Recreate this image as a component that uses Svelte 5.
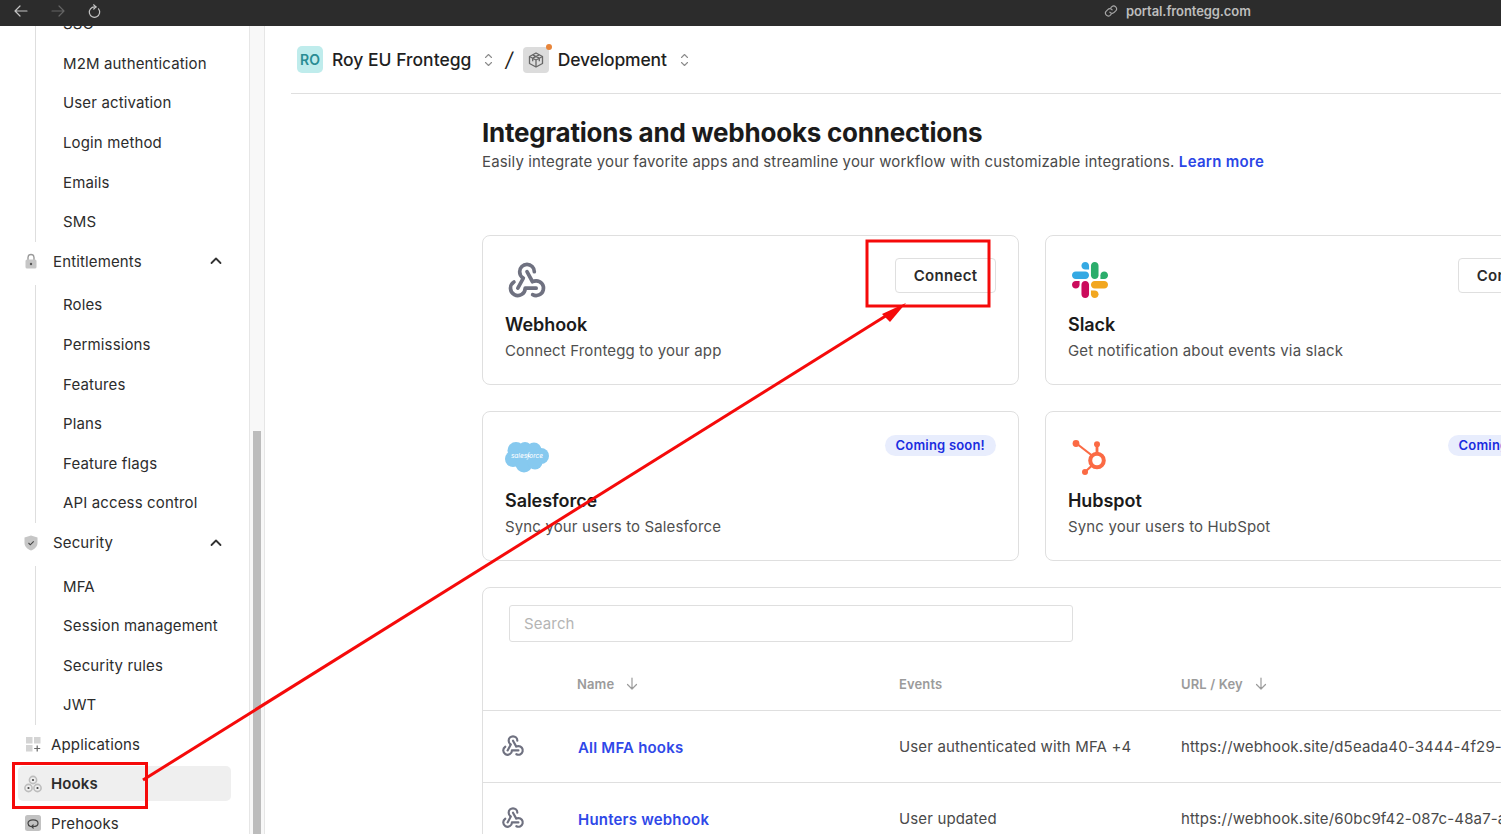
<script lang="ts">
  const webhookPaths = [
    "M4.876 13.61a4 4 0 1 0 6.124 3.39h6",
    "M15.066 20.502a4 4 0 1 0 1.934 -7.502c-.706 0 -1.424 .179 -2 .5l-3 -5.5",
    "M16 8a4 4 0 1 0 -8 0c0 1.506 .77 2.818 2 3.5l-3 5.5",
  ];

  const navGroups = [
    { items: ["SSO", "M2M authentication", "User activation", "Login method", "Emails", "SMS"], head: "Entitlements", icon: "lock" },
    { items: ["Roles", "Permissions", "Features", "Plans", "Feature flags", "API access control"], head: "Security", icon: "shield" },
    { items: ["MFA", "Session management", "Security rules", "JWT"], head: "", icon: "" },
  ];

  const hooks = [
    { name: "All MFA hooks", events: "User authenticated with MFA +4", url: "https://webhook.site/d5eada40-3444-4f29-a1c7-92be01d7f3aa" },
    { name: "Hunters webhook", events: "User updated", url: "https://webhook.site/60bc9f42-087c-48a7-a3d1-5fe2c8b1704e" },
  ];
</script>

{#snippet webhook(size, stroke)}
  <svg width={size} height={size} viewBox="0 0 24 24" fill="none" stroke="#6f7180" stroke-width={stroke} stroke-linecap="round" stroke-linejoin="round">
    {#each webhookPaths as d}
      <path {d} />
    {/each}
  </svg>
{/snippet}

{#snippet updown()}
  <svg class="updown" width="9" height="14" viewBox="0 0 9 14" fill="none" stroke="#8c8c8c" stroke-width="1.1" stroke-linecap="round" stroke-linejoin="round">
    <path d="M1.5 4.5 4.5 1.5l3 3" />
    <path d="M1.5 9.5l3 3 3-3" />
  </svg>
{/snippet}

{#snippet sortArrow()}
  <svg width="12" height="13" viewBox="0 0 12 13" fill="none" stroke="#9b9b9b" stroke-width="1.2" stroke-linecap="round" stroke-linejoin="round">
    <path d="M6 1v11M1.5 7.5 6 12l4.5-4.5" />
  </svg>
{/snippet}

<div class="page">
  <header class="browser-bar">
    <svg class="browser-bar__icon" width="14" height="12" viewBox="0 0 14 12" fill="none" stroke="#c4c4c4" stroke-width="1.2" stroke-linecap="round" stroke-linejoin="round">
      <path d="M13 6H1M6 1 1 6l5 5" />
    </svg>
    <svg class="browser-bar__icon" width="14" height="12" viewBox="0 0 14 12" fill="none" stroke="#646464" stroke-width="1.2" stroke-linecap="round" stroke-linejoin="round">
      <path d="M1 6h12M8 1l5 5-5 5" />
    </svg>
    <svg class="browser-bar__icon" width="13" height="15" viewBox="0 0 13 15" fill="none" stroke="#c4c4c4" stroke-width="1.2" stroke-linecap="round" stroke-linejoin="round">
      <path d="M10.500 4.800a5.200 5.200 0 1 1-3.900-1.900H8" />
      <path d="M5.600.8 8 2.900 5.800 5" />
    </svg>
    <div class="browser-bar__url">
      <svg width="14" height="14" viewBox="0 0 24 24" fill="none" stroke="#a8a8a8" stroke-width="2" stroke-linecap="round" stroke-linejoin="round">
        <path d="M10 14a5 5 0 0 0 7.500.5l3-3a5 5 0 0 0-7-7l-1.700 1.700" />
        <path d="M14 10a5 5 0 0 0-7.500-.5l-3 3a5 5 0 0 0 7 7l1.700-1.700" />
      </svg>
      <span>portal.frontegg.com</span>
    </div>
  </header>

  <div class="body">
    <aside class="sidebar">
      <div class="sidebar__inner">
        {#each navGroups as group}
          <ul class="sublist">
            {#each group.items as item}
              <li class="sublist__item">{item}</li>
            {/each}
          </ul>
          {#if group.head}
            <div class="nav-head">
              {#if group.icon === "lock"}
                <svg width="14" height="16" viewBox="0 0 14 16">
                  <path d="M4 7V4.500a3 3 0 0 1 6 0V7" fill="none" stroke="#9a9a9a" stroke-width="1.400" />
                  <rect x="1.500" y="6.500" width="11" height="9" rx="1.500" fill="#c6c6c6" />
                  <circle cx="7" cy="11" r="1.200" fill="#555" />
                </svg>
              {:else}
                <svg width="14" height="16" viewBox="0 0 14 16">
                  <path d="M7 .5 13.500 2.500V8c0 3.600-2.800 6.200-6.500 7.500C3.300 14.200.5 11.600.5 8V2.500z" fill="#c6c6c6" />
                  <path d="M4.500 8 6.300 9.800 9.700 6.300" fill="none" stroke="#444" stroke-width="1.100" />
                </svg>
              {/if}
              <span class="nav-head__label">{group.head}</span>
              <svg width="12" height="8" viewBox="0 0 12 8" fill="none" stroke="#333" stroke-width="1.800" stroke-linecap="round" stroke-linejoin="round">
                <path d="M1.500 6 6 1.500 10.500 6" />
              </svg>
            </div>
          {/if}
        {/each}

        <div class="nav-links">
          <div class="nav-link">
            <svg width="15" height="15" viewBox="0 0 15 15">
              <rect width="6.500" height="6.500" fill="#d4d4d4" />
              <rect x="8" width="6.500" height="6.500" fill="#d4d4d4" />
              <rect y="8" width="6.500" height="6.500" fill="#d4d4d4" />
              <path d="M11.200 8.500v6M8.200 11.500h6" stroke="#666" stroke-width="1.200" />
            </svg>
            <span>Applications</span>
          </div>
          <div class="nav-link nav-link--active">
            <svg width="18" height="18" viewBox="0 0 18 18">
              <circle cx="9" cy="5" r="3.600" fill="none" stroke="#bdbdbd" stroke-width="1.600" />
              <circle cx="4.500" cy="13" r="3.600" fill="none" stroke="#bdbdbd" stroke-width="1.600" />
              <circle cx="13.500" cy="13" r="3.600" fill="none" stroke="#bdbdbd" stroke-width="1.600" />
              <circle cx="9" cy="5" r="1.100" fill="#444" />
              <circle cx="4.500" cy="13" r="1.100" fill="#444" />
              <circle cx="13.500" cy="13" r="1.100" fill="#444" />
            </svg>
            <span>Hooks</span>
          </div>
          <div class="nav-link nav-link--prehooks">
            <svg width="16" height="16" viewBox="0 0 16 16">
              <rect width="16" height="16" rx="2.500" fill="#c2c2c2" />
              <path d="M5.500 11.500C3.800 10.800 3 9.600 3 8.200 3 6.200 5.200 4.800 8 4.800s5 1.400 5 3.400-2.200 3.300-5 3.300H7" fill="none" stroke="#444" stroke-width="1.200" stroke-linecap="round" />
              <path d="M8.200 10 6.600 11.500 8.200 13" fill="none" stroke="#444" stroke-width="1.200" stroke-linecap="round" />
            </svg>
            <span>Prehooks</span>
          </div>
        </div>
      </div>
    </aside>

    <div class="gutter"><div class="gutter__thumb"></div></div>

    <main class="main">
      <div class="crumbs">
        <span class="crumbs__avatar">RO</span>
        <span class="crumbs__name">Roy EU Frontegg</span>
        {@render updown()}
        <span class="crumbs__slash">/</span>
        <span class="crumbs__env">
          <svg width="16" height="16" viewBox="0 0 16 16" fill="none" stroke="#666" stroke-width="1.300" stroke-linejoin="round">
            <path d="M8 1 14.500 4.500V11.500L8 15 1.500 11.500V4.500z" />
            <path d="M1.500 4.500 8 8l6.500-3.500M8 8v7M4.700 2.800 11.300 6.200v3M11.300 2.800 4.700 6.200v3" />
          </svg>
          <span class="crumbs__dot"></span>
        </span>
        <span class="crumbs__name crumbs__name--env">Development</span>
        {@render updown()}
      </div>

      <div class="content">
        <h1>Integrations and webhooks connections</h1>
        <p class="lead">Easily integrate your favorite apps and streamline your workflow with customizable integrations. <a href="#learn">Learn more</a></p>

        <div class="cards">
          <section class="card">
            <div class="card__top">
              <div class="card__logo card__logo--webhook">{@render webhook(44, 2)}</div>
              <button class="connect" type="button">Connect</button>
            </div>
            <h2>Webhook</h2>
            <p>Connect Frontegg to your app</p>
          </section>

          <section class="card">
            <div class="card__top">
              <div class="card__logo card__logo--slack">
                <svg width="36" height="36" viewBox="0 0 122.800 122.800">
                  <path d="M25.800 77.600c0 7.100-5.800 12.900-12.900 12.900S0 84.700 0 77.600s5.800-12.900 12.900-12.900h12.900v12.900z" fill="#cb0c5c" />
                  <path d="M32.300 77.600c0-7.100 5.800-12.900 12.900-12.900s12.900 5.800 12.900 12.900v32.300c0 7.100-5.800 12.900-12.900 12.900s-12.900-5.800-12.900-12.900V77.600z" fill="#cb0c5c" />
                  <path d="M45.200 25.800c-7.100 0-12.900-5.800-12.900-12.900S38.100 0 45.200 0s12.900 5.800 12.900 12.900v12.900H45.200z" fill="#35a9e3" />
                  <path d="M45.200 32.300c7.100 0 12.900 5.800 12.900 12.900s-5.800 12.900-12.900 12.900H12.900C5.800 58.100 0 52.300 0 45.200s5.800-12.900 12.900-12.900h32.300z" fill="#35a9e3" />
                  <path d="M97 45.200c0-7.100 5.800-12.900 12.900-12.900s12.900 5.800 12.900 12.900-5.800 12.900-12.900 12.900H97V45.200z" fill="#2bad6b" />
                  <path d="M90.500 45.200c0 7.100-5.800 12.900-12.900 12.900s-12.900-5.800-12.900-12.900V12.900C64.700 5.800 70.500 0 77.600 0s12.900 5.800 12.900 12.900v32.300z" fill="#2bad6b" />
                  <path d="M77.600 97c7.100 0 12.900 5.800 12.900 12.900s-5.800 12.900-12.900 12.900-12.900-5.800-12.900-12.900V97h12.900z" fill="#f2a71f" />
                  <path d="M77.600 90.500c-7.100 0-12.900-5.800-12.900-12.900s5.800-12.900 12.900-12.900h32.300c7.100 0 12.900 5.800 12.900 12.900s-5.800 12.900-12.900 12.900H77.600z" fill="#f2a71f" />
                </svg>
              </div>
              <button class="connect" type="button">Connect</button>
            </div>
            <h2>Slack</h2>
            <p>Get notification about events via slack</p>
          </section>

          <section class="card">
            <div class="card__top">
              <div class="card__logo card__logo--salesforce">
                <svg width="44" height="32" viewBox="0 0 44 32">
                  <g fill="#86c9ef">
                    <circle cx="11" cy="9.500" r="8.500" />
                    <circle cx="20" cy="8" r="7" />
                    <circle cx="29" cy="9" r="7.500" />
                    <circle cx="36" cy="15" r="8" />
                    <circle cx="8" cy="18" r="8" />
                    <circle cx="19" cy="23" r="8.500" />
                    <circle cx="30" cy="21" r="7.500" />
                  </g>
                  <text x="22" y="17" text-anchor="middle" class="sf-text">salesforce</text>
                </svg>
              </div>
              <span class="soon">Coming soon!</span>
            </div>
            <h2>Salesforce</h2>
            <p>Sync your users to Salesforce</p>
          </section>

          <section class="card">
            <div class="card__top">
              <div class="card__logo card__logo--hubspot">
                <svg width="36" height="36" viewBox="0 0 36 36">
                  <g stroke="#fb6a44" fill="none">
                    <circle cx="25" cy="21.500" r="6.800" stroke-width="4" />
                    <path d="M4.500 4.500 20 16.500" stroke-width="2.200" />
                    <path d="M25 5v10" stroke-width="2.800" />
                    <path d="M13 33 20 26.500" stroke-width="2.200" />
                  </g>
                  <g fill="#fb6a44">
                    <circle cx="4" cy="4.500" r="3.400" />
                    <circle cx="25" cy="5.300" r="3" />
                    <circle cx="13" cy="33" r="3" />
                  </g>
                </svg>
              </div>
              <span class="soon">Coming soon!</span>
            </div>
            <h2>Hubspot</h2>
            <p>Sync your users to HubSpot</p>
          </section>
        </div>

        <section class="table-card">
          <div class="search">Search</div>
          <div class="table-row table-row--head">
            <span></span>
            <span class="th">Name {@render sortArrow()}</span>
            <span class="th">Events</span>
            <span class="th">URL / Key {@render sortArrow()}</span>
          </div>
          {#each hooks as hook}
            <div class="table-row">
              <span class="table-row__icon">{@render webhook(26, 2)}</span>
              <a class="table-row__name" href="#hook">{hook.name}</a>
              <span>{hook.events}</span>
              <span class="table-row__url">{hook.url}</span>
            </div>
          {/each}
        </section>
      </div>
    </main>
  </div>

  <!-- red annotation drawn over the screenshot -->
  <svg class="markup" width="1501" height="834" viewBox="0 0 1501 834" fill="none">
    <rect x="867" y="241" width="122" height="65" stroke="#f50a0a" stroke-width="3" />
    <rect x="13.500" y="763.500" width="133" height="44" stroke="#f50a0a" stroke-width="3" />
    <path d="M143 780 892 312" stroke="#f50a0a" stroke-width="3" />
    <path d="M906 303 882 314 890 322z" fill="#f50a0a" />
  </svg>
</div>

<style>
  :global(body) {
    margin: 0;
    background: #fff;
  }

  .page {
    position: relative;
    display: flex;
    flex-direction: column;
    width: 1501px;
    height: 834px;
    overflow: hidden;
    color: #2c2c2c;
    font-family: Inter, "Liberation Sans", sans-serif;
    font-size: 15px;
    letter-spacing: 0.14px;
  }

  .browser-bar {
    display: flex;
    flex: none;
    align-items: center;
    gap: 23px;
    box-sizing: border-box;
    height: 26px;
    padding: 0 0 4px 14px;
    background: #2c2c2c;
  }

  .browser-bar__url {
    display: flex;
    align-items: center;
    gap: 8px;
    margin-left: 980px;
    color: #bdbdbd;
    font-size: 13px;
    font-weight: 600;
    letter-spacing: -0.1px;
  }

  .body {
    display: flex;
    flex: 1;
    min-height: 0;
  }

  .sidebar {
    flex: none;
    width: 249px;
    overflow: hidden;
    border-right: 1px solid #e6e6e6;
  }

  .sidebar__inner {
    margin-top: -22px;
  }

  .sublist {
    margin: 0 0 0 35px;
    padding: 0 0 0 27px;
    border-left: 1px solid #dedede;
    list-style: none;
  }

  .sublist:not(:first-child) {
    margin-top: 4px;
  }

  .sublist__item {
    display: flex;
    align-items: center;
    height: 39.6px;
    white-space: nowrap;
  }

  .nav-head {
    display: flex;
    align-items: center;
    gap: 15px;
    height: 39.6px;
    padding: 0 27px 0 24px;
  }

  .nav-head__label {
    flex: 1;
  }

  .nav-links {
    display: flex;
    flex-direction: column;
    gap: 4.6px;
    padding: 2px 0 0 18px;
  }

  .nav-link {
    display: flex;
    align-items: center;
    gap: 10px;
    width: 213px;
    height: 35px;
    padding-left: 8px;
    box-sizing: border-box;
    border-radius: 5px;
  }

  .nav-link--active {
    gap: 9px;
    padding-left: 6px;
    background: #efefef;
    font-weight: 600;
  }

  .nav-link--prehooks {
    gap: 10px;
    padding-left: 7px;
  }

  .gutter {
    flex: none;
    width: 15px;
    padding: 405px 3px 0;
    box-sizing: border-box;
    border-right: 1px solid #e6e6e6;
    background: #f8f8f8;
  }

  .gutter__thumb {
    width: 8px;
    height: 100%;
    background: #bcbcbc;
  }

  .main {
    flex: 1;
    min-width: 0;
    padding-left: 26px;
    background: #fff;
  }

  .crumbs {
    display: flex;
    align-items: center;
    box-sizing: border-box;
    height: 68px;
    padding-left: 6px;
    border-bottom: 1px solid #dfdfdf;
    color: #1f1f1f;
  }

  .crumbs__avatar {
    display: flex;
    flex: none;
    align-items: center;
    justify-content: center;
    width: 26px;
    height: 27px;
    margin-right: 9px;
    border-radius: 5px;
    background: #bfecec;
    color: #2a8c94;
    font-size: 14px;
    font-weight: 600;
  }

  .crumbs__name {
    font-size: 17.5px;
    font-weight: 500;
    letter-spacing: 0;
  }

  .crumbs__name--env {
    margin-left: 9px;
    letter-spacing: -0.15px;
  }

  .updown {
    margin-left: 13px;
  }

  .crumbs__slash {
    margin: 0 10px 0 12px;
    font-size: 20px;
    font-style: italic;
  }

  .crumbs__env {
    position: relative;
    display: flex;
    flex: none;
    align-items: center;
    justify-content: center;
    width: 26px;
    height: 26px;
    border-radius: 4px;
    background: #dcdcdc;
  }

  .crumbs__dot {
    position: absolute;
    top: -3px;
    right: -3px;
    width: 6px;
    height: 6px;
    border-radius: 50%;
    background: #e8853a;
  }

  .content {
    padding: 22px 0 0 191px;
  }

  h1 {
    margin: 0;
    color: #1b1b1b;
    font-size: 26px;
    font-weight: 700;
    line-height: 34px;
    letter-spacing: -0.22px;
    white-space: nowrap;
  }

  .lead {
    margin: 2px 0 0;
    color: #4a4a4a;
    line-height: 20px;
    white-space: nowrap;
  }

  .lead a {
    color: #2b46e6;
    font-weight: 600;
    letter-spacing: 0.3px;
    text-decoration: none;
  }

  .cards {
    display: grid;
    grid-template-columns: 537px 537px;
    gap: 26px;
    margin-top: 63px;
  }

  .card {
    box-sizing: border-box;
    height: 150px;
    padding: 22px 22px 0;
    border: 1px solid #dfdfdf;
    border-radius: 8px;
  }

  .card__top {
    display: flex;
    align-items: flex-start;
    justify-content: space-between;
    height: 55px;
  }

  .card__logo {
    display: flex;
  }

  .card__logo--webhook {
    margin-top: -1px;
  }

  .card__logo--slack {
    margin: 4px 0 0 4px;
  }

  .card__logo--salesforce {
    margin-top: 7px;
  }

  .card__logo--hubspot {
    margin: 5px 0 0 4px;
  }

  .sf-text {
    fill: #fff;
    font-size: 6.5px;
    font-style: italic;
    letter-spacing: 0;
  }

  .connect {
    box-sizing: border-box;
    width: 101px;
    height: 35px;
    padding: 0;
    border: 1px solid #dfdfdf;
    border-radius: 4px;
    background: #fff;
    color: #2b2b2b;
    font: inherit;
    font-weight: 600;
    letter-spacing: 0.3px;
  }

  .soon {
    margin-top: 1px;
    padding: 0 11px;
    border-radius: 11px;
    background: #e8edfd;
    color: #1a2ce0;
    font-size: 13px;
    font-weight: 600;
    line-height: 21px;
    letter-spacing: 0.2px;
  }

  h2 {
    margin: 0;
    color: #1b1b1b;
    font-size: 18px;
    font-weight: 600;
    line-height: 24px;
    letter-spacing: -0.05px;
  }

  .card p {
    margin: 4px 0 0;
    color: #4f4f4f;
    line-height: 20px;
    white-space: nowrap;
  }

  .table-card {
    box-sizing: border-box;
    width: 1100px;
    height: 400px;
    margin-top: 26px;
    border: 1px solid #dfdfdf;
    border-radius: 8px 8px 0 0;
  }

  .search {
    display: flex;
    align-items: center;
    box-sizing: border-box;
    width: 564px;
    height: 37px;
    margin: 17px 0 0 26px;
    padding-left: 14px;
    border: 1px solid #dfdfdf;
    border-radius: 3px;
    color: #b5b5b5;
  }

  .table-row {
    display: grid;
    grid-template-columns: 94px 322px 282px 1fr;
    align-items: center;
    box-sizing: border-box;
    height: 72px;
    border-bottom: 1px solid #dfdfdf;
    color: #4a4a4a;
    white-space: nowrap;
  }

  .table-row--head {
    height: 69px;
    padding-top: 15px;
  }

  .th {
    display: flex;
    align-items: center;
    gap: 12px;
    color: #9b9b9b;
    font-size: 13px;
    font-weight: 600;
  }

  .table-row__icon {
    display: flex;
    margin-top: -3px;
    padding-left: 17px;
  }

  .table-row__name {
    padding: 2px 0 0 1px;
    color: #2f48e8;
    font-weight: 600;
    letter-spacing: 0.2px;
    text-decoration: none;
  }

  .table-row__url {
    overflow: hidden;
  }

  .markup {
    position: absolute;
    top: 0;
    left: 0;
    pointer-events: none;
  }
</style>
